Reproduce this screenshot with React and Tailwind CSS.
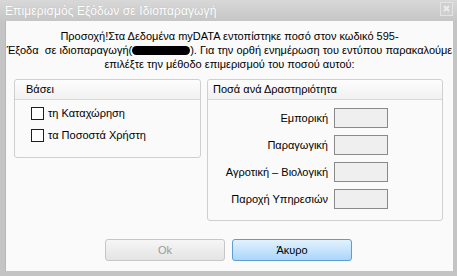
import React from "react";

const font = { fontFamily: '"DejaVu Sans", sans-serif' };

function Check({ label }) {
  return (
    <div className="flex items-center gap-[4px] h-[13px]">
      <div className="w-[13px] h-[13px] border border-[#1e1e1e] bg-white" />
      <span className="text-[11px] leading-[13px] text-black">{label}</span>
    </div>
  );
}

function Row({ label }) {
  return (
    <div className="flex items-center justify-end gap-[6px] h-[20px]">
      <span className="text-[11px] leading-[13px] text-black">{label}</span>
      <div className="w-[54px] h-[20px] border border-[#8a8a8a] bg-[#efefef]" />
    </div>
  );
}

export default function App() {
  return (
    <div
      className="w-[457px] h-[276px] bg-[#c4c4c4] flex flex-col font-['Liberation_Sans',sans-serif]"
    >
      <div className="h-[21px] flex items-center justify-between pl-[5px] pr-[4px] bg-gradient-to-b from-[#d8d8d8] to-[#c6c6c6]">
        <span className="text-[12px] text-white tracking-[0.1px]" style={{ textShadow: "0 0 1px #b0b0b0" }}>
          Επιμερισμός Εξόδων σε Ιδιοπαραγωγή
        </span>
        <div className="w-[13px] h-[14px] border border-[#e4e4e4] bg-[#cfcfcf] flex items-center justify-center mb-[4px]">
          <svg width="7" height="7" viewBox="0 0 7 7">
            <path d="M1 1L6 6M6 1L1 6" stroke="#ededed" strokeWidth="2" />
          </svg>
        </div>
      </div>
      <div className="flex-1 ml-[5px] mr-[4px] mb-[5px] bg-[#fafafa] flex flex-col border-l border-[#b8b8b8]">
        <div className="pt-[8px] text-center text-[11px] leading-[14px] text-black">
          <div>Προσοχή!Στα Δεδομένα myDATA εντοπίστηκε ποσό στον κωδικό 595-</div>
          <div>
            Έξοδα&nbsp; σε ιδιοπαραγωγή(
            <span className="inline-block w-[58px] h-[9px] rounded-full bg-black align-[-1px]" />
            ). Για την ορθή ενημέρωση του εντύπου παρακαλούμε
          </div>
          <div>επιλέξτε την μέθοδο επιμερισμού του ποσού αυτού:</div>
        </div>
        <div className="flex gap-[6px] pl-[8px] mt-[8px]">
          <div className="w-[187px] h-[79px] border border-[#cfcfcf] rounded-[3px] bg-[#fafafa] flex flex-col">
            <div className="h-[20px] border-b border-[#d9d9d9] bg-gradient-to-b from-[#fdfdfd] to-[#f1f1f1] flex items-center pl-[11px] text-[11px] text-black rounded-t-[3px]">
              Βάσει
            </div>
            <div className="flex flex-col gap-[9px] pl-[16px] pt-[7px]">
              <Check label="τη Καταχώρηση" />
              <Check label="τα Ποσοστά Χρήστη" />
            </div>
          </div>
          <div className="w-[236px] h-[142px] border border-[#cfcfcf] rounded-[3px] bg-[#fafafa] flex flex-col">
            <div className="h-[20px] border-b border-[#d9d9d9] bg-gradient-to-b from-[#fdfdfd] to-[#f1f1f1] flex items-center pl-[5px] text-[11px] text-black rounded-t-[3px]">
              Ποσά ανά Δραστηριότητα
            </div>
            <div className="flex flex-col gap-[7px] pr-[54px] pt-[8px]">
              <Row label="Εμπορική" />
              <Row label="Παραγωγική" />
              <Row label="Αγροτική – Βιολογική" />
              <Row label="Παροχή Υπηρεσιών" />
            </div>
          </div>
        </div>
        <div className="flex justify-center gap-[7px] mt-[18px] pr-[2px]">
          <div className="w-[120px] h-[22px] rounded-[3px] border border-[#c6c6c6] bg-gradient-to-b from-[#f6f6f6] to-[#e4e4e4] flex items-center justify-center text-[11px] text-[#9a9a9a]">
            Ok
          </div>
          <div className="w-[120px] h-[22px] rounded-[3px] border border-[#5f9cd3] bg-gradient-to-b from-[#e3f2fd] to-[#a9d6fa] flex items-center justify-center text-[11px] text-black">
            Άκυρο
          </div>
        </div>
      </div>
    </div>
  );
}
